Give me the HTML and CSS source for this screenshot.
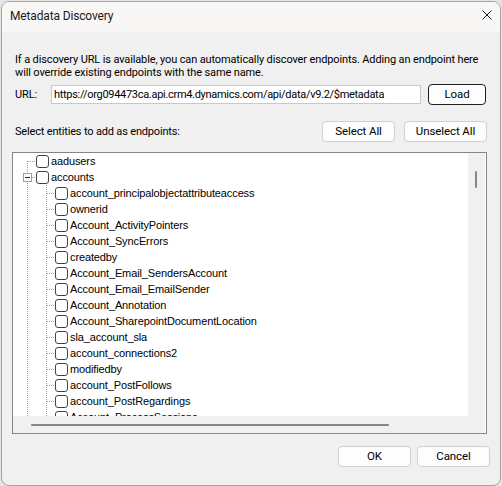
FILE: index.html
```html
<!DOCTYPE html>
<html>
<head>
<meta charset="utf-8">
<link rel="stylesheet" href="styles.css">
</head>
<body>
<div class="window">
  <div class="titlebar">
    <span class="title">Metadata Discovery</span>
    <svg class="close" width="10" height="10" viewBox="0 0 10 10"><path d="M0.5 0.5 L9.5 9.5 M9.5 0.5 L0.5 9.5" stroke="#1a1a1a" stroke-width="1" fill="none"/></svg>
  </div>
  <div class="content">
    <p class="desc">If a discovery URL is available, you can automatically discover endpoints. Adding an endpoint here<br>will override existing endpoints with the same name.</p>
    <div class="url-row">
      <span class="url-label">URL:</span>
      <div class="textbox">https://org094473ca.api.crm4.dynamics.com/api/data/v9.2/$metadata</div>
      <button class="btn btn-default btn-load">Load</button>
    </div>
    <div class="select-row">
      <span class="select-label">Select entities to add as endpoints:</span>
      <button class="btn btn-select">Select All</button>
      <button class="btn btn-unselect">Unselect All</button>
    </div>
    <div class="tree">
      <div class="tree-view">
        <div class="row root first"><span class="cb"></span><span class="lbl">aadusers</span></div>
        <div class="row root expanded"><span class="expander"></span><span class="cb"></span><span class="lbl">accounts</span></div>
        <div class="row child"><span class="cb"></span><span class="lbl">account_principalobjectattributeaccess</span></div>
        <div class="row child"><span class="cb"></span><span class="lbl">ownerid</span></div>
        <div class="row child"><span class="cb"></span><span class="lbl">Account_ActivityPointers</span></div>
        <div class="row child"><span class="cb"></span><span class="lbl">Account_SyncErrors</span></div>
        <div class="row child"><span class="cb"></span><span class="lbl">createdby</span></div>
        <div class="row child"><span class="cb"></span><span class="lbl">Account_Email_SendersAccount</span></div>
        <div class="row child"><span class="cb"></span><span class="lbl">Account_Email_EmailSender</span></div>
        <div class="row child"><span class="cb"></span><span class="lbl">Account_Annotation</span></div>
        <div class="row child"><span class="cb"></span><span class="lbl">Account_SharepointDocumentLocation</span></div>
        <div class="row child"><span class="cb"></span><span class="lbl">sla_account_sla</span></div>
        <div class="row child"><span class="cb"></span><span class="lbl">account_connections2</span></div>
        <div class="row child"><span class="cb"></span><span class="lbl">modifiedby</span></div>
        <div class="row child"><span class="cb"></span><span class="lbl">account_PostFollows</span></div>
        <div class="row child"><span class="cb"></span><span class="lbl">account_PostRegardings</span></div>
        <div class="row child"><span class="cb"></span><span class="lbl">Account_ProcessSessions</span></div>
      </div>
      <div class="vscroll"><div class="vthumb"></div></div>
      <div class="hscroll"><div class="hthumb"></div></div>
      <div class="corner"></div>
    </div>
    <div class="footer">
      <button class="btn btn-ok">OK</button>
      <button class="btn btn-cancel">Cancel</button>
    </div>
  </div>
</div>
</body>
</html>
```

FILE: styles.css
```css
html, body {
  margin: 0;
  padding: 0;
}
body {
  width: 502px;
  height: 486px;
  background: #e4e4e4;
  overflow: hidden;
  font-family: Roboto, "Liberation Sans", sans-serif;
}
.window {
  box-sizing: border-box;
  margin: 1px 0 0 1px;
  width: 500px;
  height: 485px;
  border: 1px solid #a3a3a3;
  border-radius: 8px;
  overflow: hidden;
  background: #f0f0f0;
  display: flex;
  flex-direction: column;
}
.titlebar {
  height: 30px;
  flex: none;
  background: #f9f7f6;
  display: flex;
  justify-content: space-between;
  align-items: flex-start;
  padding: 6px 8px 0 8px;
  box-sizing: border-box;
}
.title {
  font-size: 12px;
  line-height: 16px;
  letter-spacing: -0.15px;
  color: #1a1a1a;
}
.close {
  margin-top: 2px;
  display: block;
}
.content {
  flex: 1;
  padding: 21px 13px 0 10px;
  display: flex;
  flex-direction: column;
  font-size: 11px;
  letter-spacing: -0.1px;
  color: #000;
}
.desc {
  margin: 0 0 0 3px;
  line-height: 13px;
  white-space: nowrap;
  letter-spacing: -0.13px;
}
.url-row {
  margin: 5px 0 0 3px;
  display: flex;
  align-items: center;
  height: 21px;
}
.url-label {
  width: 36px;
  flex: none;
}
.textbox {
  box-sizing: border-box;
  width: 370px;
  height: 19px;
  border: 1px solid #c8c8c8;
  background: #fff;
  padding: 0 0 0 2px;
  line-height: 17px;
  white-space: nowrap;
  overflow: hidden;
  letter-spacing: -0.3px;
}
.btn {
  box-sizing: border-box;
  height: 21px;
  padding: 0;
  border: 1px solid #d0d0d0;
  border-radius: 4px;
  background: #fdfdfd;
  font-family: inherit;
  font-size: 11.5px;
  letter-spacing: -0.1px;
  color: #000;
  line-height: 19px;
}
.btn-default {
  border-color: #1f1f1f;
}
.btn-load {
  width: 58px;
  margin-left: 7px;
}
.select-row {
  margin: 16px 0 0 3px;
  display: flex;
  align-items: center;
  height: 21px;
}
.select-label {
  flex: 1;
  letter-spacing: -0.17px;
}
.btn-select {
  width: 73px;
}
.btn-unselect {
  width: 83px;
  margin-left: 9px;
}
.tree {
  margin-top: 10px;
  box-sizing: border-box;
  height: 282px;
  border: 1px solid #858585;
  background: #fff;
  display: grid;
  grid-template-columns: 455px 17px;
  grid-template-rows: 263px 17px;
}
.tree-view {
  overflow: hidden;
  font-family: "Liberation Sans", Arial, sans-serif;
  font-size: 11px;
  letter-spacing: -0.12px;
}
.row {
  height: 16px;
  display: flex;
  align-items: center;
  white-space: nowrap;
  background-repeat: no-repeat;
}
.row.root {
  padding-left: 23px;
  background-image:
    repeating-linear-gradient(to bottom, #a0a0a0 0 1px, transparent 1px 2px),
    repeating-linear-gradient(to right, #a0a0a0 0 1px, transparent 1px 2px);
  background-position: 14px 0, 15px 8px;
  background-size: 1px 100%, 8px 1px;
}
.row.root.first {
  background-position: 14px 8px, 15px 8px;
  background-size: 1px 8px, 8px 1px;
}
.row.root.expanded {
  padding-left: 10px;
  background-position: 14px 0, 19px 8px;
  background-size: 1px 100%, 4px 1px;
}
.row.child {
  padding-left: 42px;
  background-image:
    repeating-linear-gradient(to bottom, #a0a0a0 0 1px, transparent 1px 2px),
    repeating-linear-gradient(to bottom, #a0a0a0 0 1px, transparent 1px 2px),
    repeating-linear-gradient(to right, #a0a0a0 0 1px, transparent 1px 2px);
  background-position: 14px 0, 33px 0, 34px 8px;
  background-size: 1px 100%, 1px 100%, 8px 1px;
}
.expander {
  box-sizing: border-box;
  width: 9px;
  height: 9px;
  border: 1px solid #a0a0a0;
  background: #fff linear-gradient(#222, #222) center / 5px 1px no-repeat;
  margin-right: 4px;
  flex: none;
}
.cb {
  box-sizing: border-box;
  width: 13px;
  height: 13px;
  border: 1px solid #444;
  border-radius: 3px;
  background: #fff;
  flex: none;
}
.lbl {
  margin-left: 2px;
  color: #000;
}
.vscroll {
  background: #f0f0f0;
  padding: 18px 0 0 7px;
  box-sizing: border-box;
}
.vthumb {
  width: 2px;
  height: 17px;
  background: #868686;
  border-radius: 1px;
}
.hscroll {
  background: #f0f0f0;
  padding: 8px 0 0 18px;
  box-sizing: border-box;
}
.hthumb {
  width: 358px;
  height: 2px;
  background: #868686;
  border-radius: 1px;
}
.corner {
  background: #f0f0f0;
}
.footer {
  margin: 12px -3px 0 0;
  display: flex;
  justify-content: flex-end;
}
.btn-ok {
  width: 73px;
}
.btn-cancel {
  width: 73px;
  margin-left: 6px;
}
```
